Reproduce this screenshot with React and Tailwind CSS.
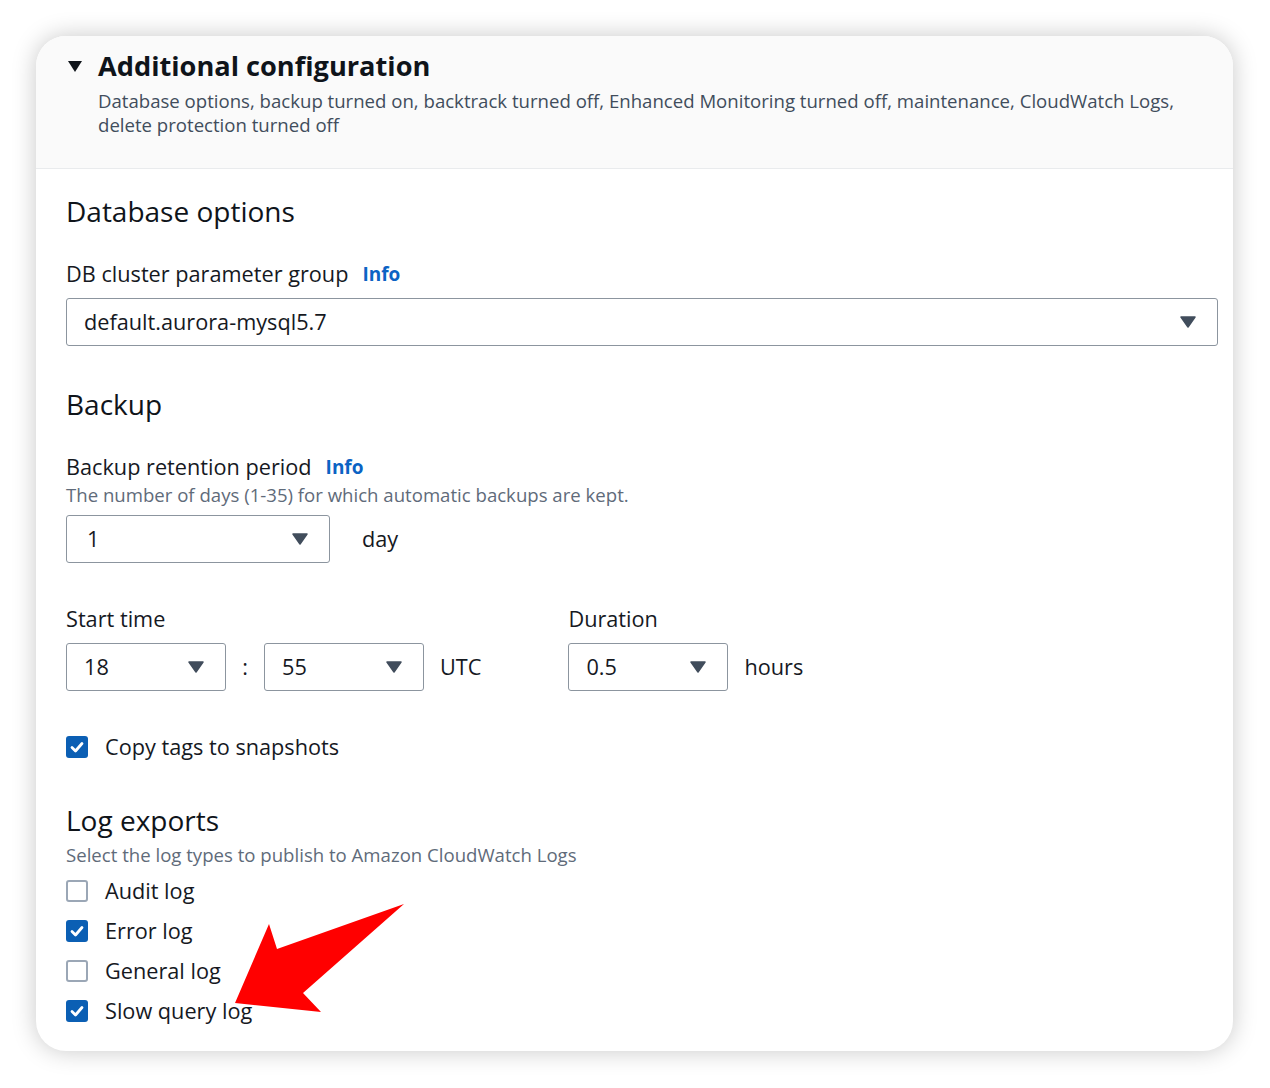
import React from 'react';

const Caret = ({ className = '' }) => (
  <svg width="16" height="12" viewBox="0 0 16 12" className={className}>
    <path d="M1 1 H15 L8 11 Z" fill="#414d5c" stroke="#414d5c" strokeWidth="1.5" strokeLinejoin="round" />
  </svg>
);

const Select = ({ value, className = '' }) => (
  <div className={`flex items-center justify-between h-[48px] border border-[#8c959f] rounded-[3px] bg-white pl-[17px] pr-[21px] ${className}`}>
    <span className="text-[21.7px] text-[#16191f]">{value}</span>
    <Caret />
  </div>
);

const Checkbox = ({ checked, label }) => (
  <div className="flex items-center h-[28px]">
    {checked ? (
      <div className="w-[22px] h-[22px] rounded-[3px] bg-[#0b5fb4] flex items-center justify-center">
        <svg width="16" height="16" viewBox="0 0 16 16">
          <path d="M3 8.5 L6.5 12 L13 4.5" fill="none" stroke="white" strokeWidth="2.8" strokeLinecap="round" strokeLinejoin="round" />
        </svg>
      </div>
    ) : (
      <div className="w-[22px] h-[22px] rounded-[3px] border-2 border-[#9ba7b6] bg-white" />
    )}
    <span className="ml-[17px] text-[21.7px] text-[#16191f]">{label}</span>
  </div>
);

const Label = ({ children, info }) => (
  <div className="flex items-center h-[28px]">
    <span className="text-[21.7px] text-[#16191f]">{children}</span>
    {info && <span className="ml-[14px] text-[19px] font-bold text-[#0b63c4]">Info</span>}
  </div>
);

export default function App() {
  return (
    <div
      className="relative w-[1270px] h-[1088px] bg-white pt-[36px] pl-[36px]"
      style={{ fontFamily: '"Open Sans", "Noto Sans", sans-serif' }}
    >
      <div className="w-[1197px] h-[1015px] rounded-[30px] bg-white overflow-hidden shadow-[0_0_24px_rgba(0,0,0,0.22)]">
        {/* Header */}
        <div className="bg-[#fafafa] border-b border-[#e9ebed] pt-[12px] pb-[31px] pl-[31px] pr-[40px]">
          <div className="flex items-center h-[36px]">
            <svg width="16" height="13" viewBox="0 0 16 13" className="mr-[15px]">
              <path d="M1 1 H15 L8 12 Z" fill="#0f141a" />
            </svg>
            <h2 className="text-[27.2px] font-bold text-[#0f141a] leading-[36px]">Additional configuration</h2>
          </div>
          <p className="mt-[5px] ml-[31px] text-[18.6px] leading-[24px] text-[#414d5c]">
            Database options, backup turned on, backtrack turned off, Enhanced Monitoring turned off, maintenance, CloudWatch Logs, delete protection turned off
          </p>
        </div>

        {/* Body */}
        <div className="pl-[30px] pr-[15px] pt-[24px]">
          <h3 className="text-[28px] leading-[36px] text-[#0f141a]">Database options</h3>
          <div className="mt-[31px]">
            <Label info>DB cluster parameter group</Label>
          </div>
          <Select value="default.aurora-mysql5.7" className="mt-[10px] w-[1152px]" />

          <h3 className="mt-[40px] text-[28px] leading-[36px] text-[#0f141a]">Backup</h3>
          <div className="mt-[31px]">
            <Label info>Backup retention period</Label>
          </div>
          <p className="mt-[2px] text-[18.6px] leading-[24px] text-[#5f6b7a]">The number of days (1-35) for which automatic backups are kept.</p>
          <div className="mt-[8px] flex items-center">
            <Select value="1" className="w-[264px] pl-[20px]" />
            <span className="ml-[32px] text-[21.7px] text-[#16191f]">day</span>
          </div>

          <div className="mt-[42px] flex">
            <div>
              <Label>Start time</Label>
              <div className="mt-[10px] flex items-center">
                <Select value="18" className="w-[160px]" />
                <span className="w-[38px] text-center text-[21.7px] text-[#16191f]">:</span>
                <Select value="55" className="w-[160px]" />
                <span className="ml-[16px] text-[21.7px] text-[#16191f]">UTC</span>
              </div>
            </div>
            <div className="ml-[87px]">
              <Label>Duration</Label>
              <div className="mt-[10px] flex items-center">
                <Select value="0.5" className="w-[160px]" />
                <span className="ml-[16px] text-[21.7px] text-[#16191f]">hours</span>
              </div>
            </div>
          </div>

          <div className="mt-[42px]">
            <Checkbox checked label="Copy tags to snapshots" />
          </div>

          <h3 className="mt-[41px] text-[28px] leading-[36px] text-[#0f141a]">Log exports</h3>
          <p className="mt-[5px] text-[18.6px] leading-[24px] text-[#5f6b7a]">Select the log types to publish to Amazon CloudWatch Logs</p>
          <div className="mt-[10px] flex flex-col gap-[12px]">
            <Checkbox label="Audit log" />
            <Checkbox checked label="Error log" />
            <Checkbox label="General log" />
            <Checkbox checked label="Slow query log" />
          </div>
        </div>
      </div>

      {/* Annotation arrow */}
      <svg className="absolute left-0 top-0 pointer-events-none" width="1270" height="1088">
        <polygon points="404,904 277,949 269,924 235,1003 321,1012 303,993" fill="#ff0000" />
      </svg>
    </div>
  );
}
